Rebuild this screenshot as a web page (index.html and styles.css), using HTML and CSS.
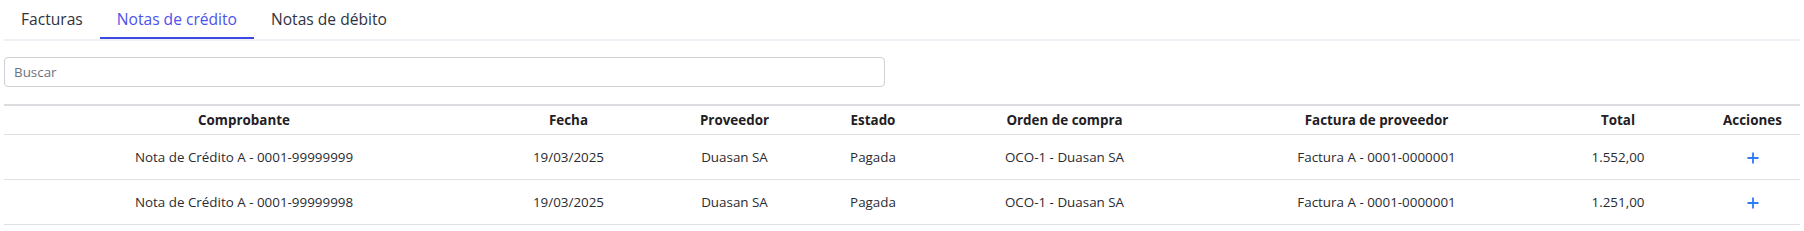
FILE: index.html
```html
<!DOCTYPE html>
<html lang="es">
<head>
<meta charset="utf-8">
<title>Notas de crédito</title>
<link rel="stylesheet" href="styles.css">
</head>
<body>
  <nav class="tabs">
    <a class="tab">Facturas</a>
    <a class="tab active">Notas de crédito</a>
    <a class="tab">Notas de débito</a>
  </nav>
  <div class="search-wrap">
    <input class="search" type="text" placeholder="Buscar">
  </div>
  <table class="grid">
    <colgroup>
      <col class="w1"><col class="w2"><col class="w3"><col class="w4">
      <col class="w5"><col class="w6"><col class="w7"><col class="w8">
    </colgroup>
    <thead>
      <tr>
        <th>Comprobante</th>
        <th>Fecha</th>
        <th>Proveedor</th>
        <th>Estado</th>
        <th>Orden de compra</th>
        <th>Factura de proveedor</th>
        <th>Total</th>
        <th class="c-acc">Acciones</th>
      </tr>
    </thead>
    <tbody>
      <tr>
        <td>Nota de Crédito A - 0001-99999999</td>
        <td>19/03/2025</td>
        <td>Duasan SA</td>
        <td>Pagada</td>
        <td>OCO-1 - Duasan SA</td>
        <td>Factura A - 0001-0000001</td>
        <td>1.552,00</td>
        <td class="c-acc"><svg class="plus" viewBox="0 0 12 12" width="12" height="12"><path d="M6 0.5V11.5M0.5 6H11.5"/></svg></td>
      </tr>
      <tr>
        <td>Nota de Crédito A - 0001-99999998</td>
        <td>19/03/2025</td>
        <td>Duasan SA</td>
        <td>Pagada</td>
        <td>OCO-1 - Duasan SA</td>
        <td>Factura A - 0001-0000001</td>
        <td>1.251,00</td>
        <td class="c-acc"><svg class="plus" viewBox="0 0 12 12" width="12" height="12"><path d="M6 0.5V11.5M0.5 6H11.5"/></svg></td>
      </tr>
    </tbody>
  </table>
</body>
</html>
```
FILE: styles.css
```css
html, body {
  margin: 0;
  background: #ffffff;
}
body {
  padding: 0 4px;
  font-family: "Open Sans", "Noto Sans", sans-serif;
  color: #222;
}
.tabs {
  display: flex;
  border-bottom: 2px solid #edf0f5;
  height: 39px;
}
.tab {
  display: block;
  padding: 0 17px 0 17px;
  line-height: 39px;
  font-size: 15.6px;
  color: #2f3340;
  cursor: pointer;
}
.tab.active {
  color: #4c52ea;
  border-bottom: 2px solid #3d47e3;
}
.search-wrap {
  padding-top: 16px;
}
.search {
  display: block;
  box-sizing: border-box;
  width: 881px;
  height: 30px;
  margin: 0;
  padding: 0 9px;
  border: 1px solid #cfd1d6;
  border-radius: 4px;
  font-family: "Open Sans", sans-serif;
  font-size: 13.4px;
  color: #333;
  outline: none;
}
.search::placeholder {
  color: #6e7380;
}
.grid {
  margin-top: 17px;
  width: 1796px;
  table-layout: fixed;
  border-collapse: collapse;
  font-size: 13.4px;
}
.w1 { width: 480px; }
.w2 { width: 169px; }
.w3 { width: 163px; }
.w4 { width: 114px; }
.w5 { width: 269px; }
.w6 { width: 355px; }
.w7 { width: 128px; }
.w8 { width: 118px; }
.grid thead tr {
  border-top: 2px solid #dcdde1;
  border-bottom: 1px solid #e0e1e5;
}
.grid tbody tr {
  border-bottom: 1px solid #e0e1e5;
}
.grid th, .grid td {
  padding: 0;
  text-align: center;
  white-space: nowrap;
}
.grid th {
  height: 28px;
  font-weight: 700;
  color: #1f2024;
}
.grid td {
  height: 44px;
  color: #2a2b30;
}
.grid .c-acc {
  padding-left: 23px;
}
.plus {
  display: inline-block;
  vertical-align: middle;
  fill: none;
  stroke: #2e7cf6;
  stroke-width: 1.8;
}
```
